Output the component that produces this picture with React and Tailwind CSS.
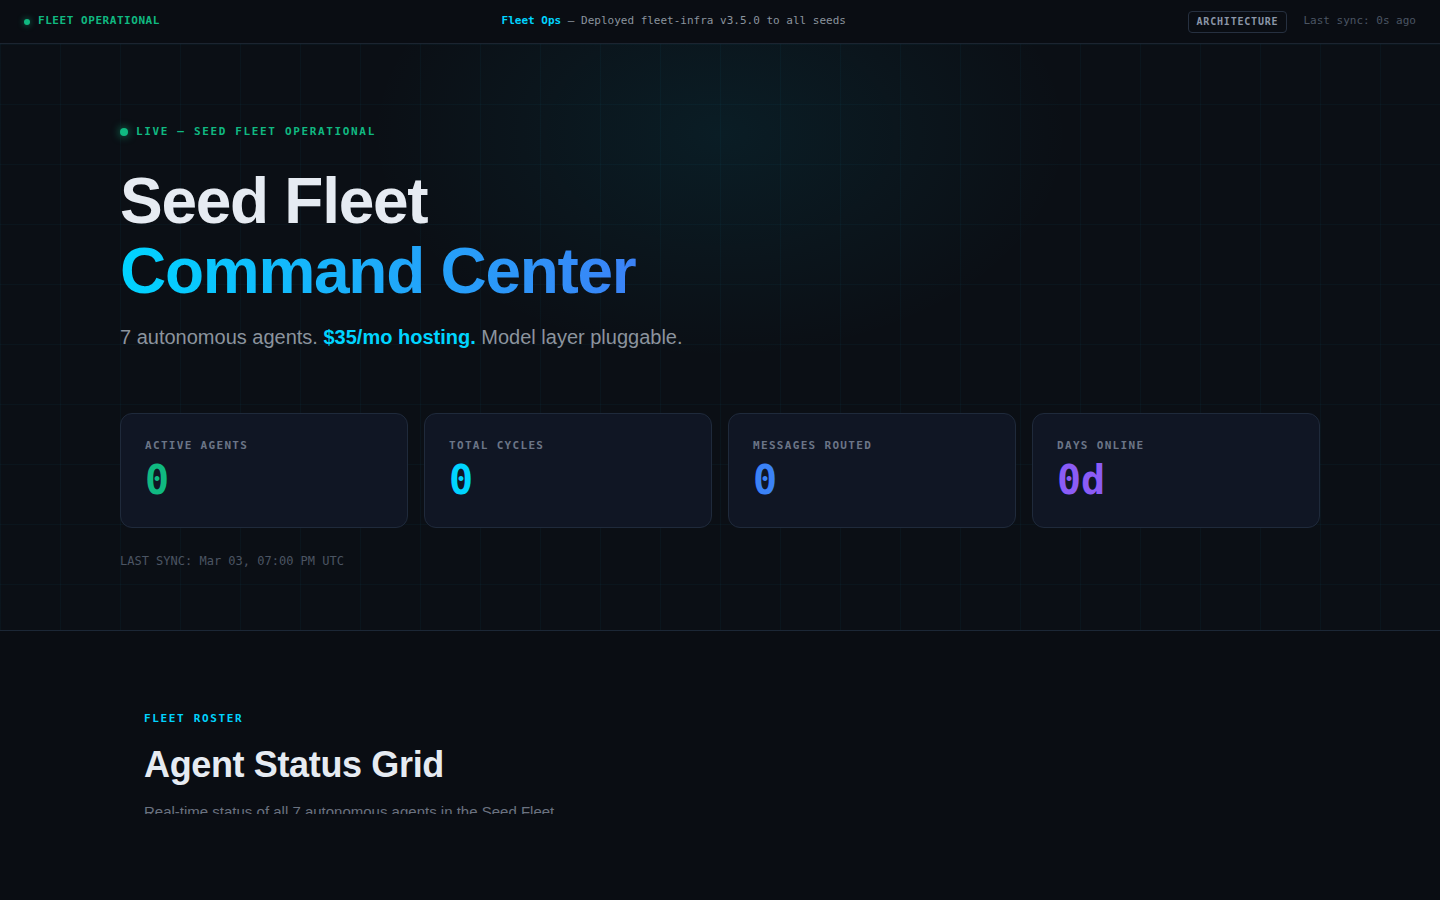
const mono = "font-['DejaVu_Sans_Mono','Liberation_Mono',monospace]";
const sans = "font-['Liberation_Sans',Arial,sans-serif]";

const stats = [
  { label: "ACTIVE AGENTS", value: "0", color: "text-[#10b981]" },
  { label: "TOTAL CYCLES", value: "0", color: "text-[#00d4ff]" },
  { label: "MESSAGES ROUTED", value: "0", color: "text-[#3b82f6]" },
  { label: "DAYS ONLINE", value: "0d", color: "text-[#8b5cf6]" },
];

function TopBar() {
  return (
    <header className={`h-[44px] flex items-center justify-between px-6 bg-[#0a0d13] border-b border-[#1c2430] ${mono}`}>
      <div className="flex items-center gap-2">
        <span className="w-[6px] h-[6px] rounded-full bg-[#10b981] shadow-[0_0_6px_rgba(16,185,129,0.7)]" />
        <span className="text-[11px] font-bold tracking-[0.05em] text-[#10b981]">FLEET OPERATIONAL</span>
      </div>
      <div className="text-[11px] text-[#8b949e]">
        <span className="font-bold text-[#00d4ff]">Fleet Ops</span> — Deployed fleet-infra v3.5.0 to all seeds
      </div>
      <div className="flex items-center gap-4">
        <button className="px-2 py-[3px] leading-[14px] border border-[#263040] rounded text-[10px] font-bold tracking-[0.08em] text-[#8b96a8]">
          ARCHITECTURE
        </button>
        <span className="text-[11px] text-[#4b5563]">Last sync: 0s ago</span>
      </div>
    </header>
  );
}

function StatCard({ label, value, color }) {
  return (
    <div className="h-[115px] rounded-xl border border-[#1f2a3b] bg-[#101624] px-6 pt-6">
      <div className={`${mono} text-[11px] leading-4 font-bold tracking-[0.12em] text-[#6b7587]`}>{label}</div>
      <div className={`${mono} mt-[6px] text-[40px] leading-10 font-bold ${color}`}>{value}</div>
    </div>
  );
}

function Hero() {
  return (
    <section className="relative overflow-hidden border-b border-[#1c2736] bg-[#0b0f15] bg-[linear-gradient(rgba(0,212,255,0.035)_1px,transparent_1px),linear-gradient(90deg,rgba(0,212,255,0.035)_1px,transparent_1px)] bg-[size:60px_60px]">
      {/* glow */}
      <div className="pointer-events-none absolute inset-0 bg-[radial-gradient(ellipse_500px_320px_at_720px_90px,rgba(0,170,200,0.09),transparent_70%)]" />
      <div className="relative max-w-[1200px] mx-auto pt-20 pb-[61px]">
        <div className={`${mono} flex items-center gap-2 text-[11px] leading-4 font-bold tracking-[0.15em] text-[#10b981]`}>
          <span className="w-2 h-2 rounded-full bg-[#10b981] shadow-[0_0_8px_rgba(16,185,129,0.8)]" />
          LIVE — SEED FLEET OPERATIONAL
        </div>
        <h1 className={`${sans} mt-[26px] text-[64px] leading-[1.1] font-bold tracking-[-0.02em]`}>
          <span className="block text-[#e6ebf2]">Seed Fleet</span>
          <span className="inline-block bg-[linear-gradient(90deg,#00d4ff,#3b82f6)] bg-clip-text text-transparent">
            Command Center
          </span>
        </h1>
        <p className={`${sans} mt-[14px] text-xl leading-8 text-[#8b949e]`}>
          7 autonomous agents. <span className="font-bold text-[#00d4ff]">$35/mo hosting.</span> Model layer pluggable.
        </p>
        <div className="mt-[60px] grid grid-cols-4 gap-4">
          {stats.map((s) => (
            <StatCard key={s.label} {...s} />
          ))}
        </div>
        <div className={`${mono} mt-[25px] text-xs leading-4 text-[#4b5563]`}>LAST SYNC: Mar 03, 07:00 PM UTC</div>
      </div>
    </section>
  );
}

function Roster() {
  return (
    <section className="h-[183px] overflow-hidden">
      <div className="max-w-[1200px] mx-auto px-6 pt-20">
        <div className={`${mono} text-[11px] leading-4 font-bold tracking-[0.15em] text-[#00d4ff]`}>FLEET ROSTER</div>
        <h2 className={`${sans} mt-[18px] text-4xl leading-10 font-bold tracking-[-0.01em] text-[#e6ebf2]`}>
          Agent Status Grid
        </h2>
        <p className={`${sans} mt-[15px] text-[15px] leading-6 text-[#6b7280]`}>
          Real-time status of all 7 autonomous agents in the Seed Fleet
        </p>
      </div>
    </section>
  );
}

export default function App() {
  return (
    <div className="min-h-[900px] bg-[#0a0d13]">
      <TopBar />
      <Hero />
      <Roster />
    </div>
  );
}
